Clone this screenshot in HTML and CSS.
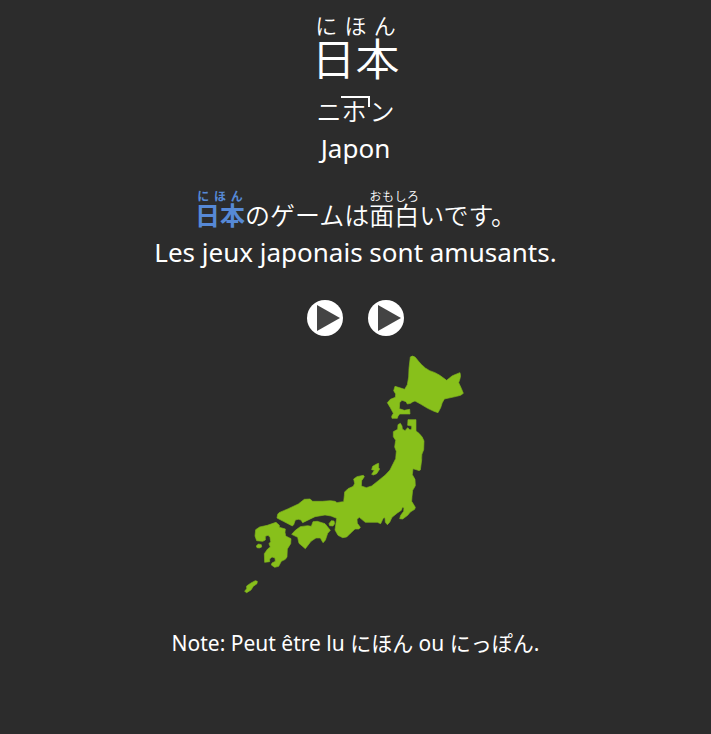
FILE: index.html
```html
<!DOCTYPE html>
<html lang="fr">
<head>
<meta charset="utf-8">
<meta name="viewport" content="width=device-width, initial-scale=1">
<title>日本 – Japon</title>
<link rel="stylesheet" href="styles.css">
</head>
<body>
<main class="card">
  <h1 class="word" lang="ja"><ruby>日本<rt>にほん</rt></ruby></h1>
  <p class="line reading" lang="ja">ニ<span class="accent">ホ</span>ン</p>
  <p class="line">Japon</p>
  <p class="line sentence" lang="ja"><ruby class="target">日本<rt>にほん</rt></ruby>のゲームは<ruby>面白<rt>おもしろ</rt></ruby>いです。</p>
  <p class="line">Les jeux japonais sont amusants.</p>
  <div class="players">
    <button class="play" type="button" aria-label="Écouter le mot">
      <svg viewBox="0 0 36 36" aria-hidden="true"><circle cx="18" cy="18" r="18"/><path d="M10 5V31L33 18Z"/></svg>
    </button>
    <button class="play" type="button" aria-label="Écouter la phrase">
      <svg viewBox="0 0 36 36" aria-hidden="true"><circle cx="18" cy="18" r="18"/><path d="M10 5V31L33 18Z"/></svg>
    </button>
  </div>
  <svg class="map" viewBox="236 350 240 250" role="img" aria-label="Carte du Japon">
    <g transform="translate(375 345) scale(.33333)">
      <path d="M106 36Q112 30 121 37Q130 49 140 59Q150 70 164 77Q181 82 193 90L215 106L231 93Q248 85 255 83Q258 91 255 101L251 113Q260 131 265 145Q259 152 245 154L208 162Q201 172 197 188L189 203L177 199L158 190L138 178L120 168Q112 170 107 175L97 177L93 170L81 166L74 173L73 191L88 196L104 193L105 207L74 207L69 214L67 220H51L50 214L55 205L46 188L37 173L46 163L61 157L62 147L56 137L60 124L70 127L89 133L97 119L101 96L102 70Z"/>
    </g>
    <g transform="translate(335 415) scale(.33333)">
      <path d="M219 14H243V48L252 55Q263 65 267 78L266 104Q258 118 260 135L256 165Q251 168 247 165L234 161L232 179L240 193L241 212L233 226L231 244L230 259L241 277L239 283L226 291L218 301L203 312L194 311L197 301L206 289L207 278L202 277L199 286L187 294L171 307L164 322L157 329L151 322L150 308L145 309L137 326L127 322L91 322L73 307L66 313L67 325L76 337L72 342L60 342L45 356L35 366L23 368L9 361L0 345L5 310L-12 303L-30 300L-60 305L-97 323L-102 315L-110 313L-119 315L-124 329L-128 333L-155 319L-174 309L-172 298L-168 293L-140 281L-110 267L-92 253L-75 252L-67 259L-38 259L-14 257L0 259L6 263L17 261L26 260L28 242L29 231L39 221L55 214L59 205L56 192L66 185L85 181L88 185L80 197L79 213L94 218L110 213L130 197L151 180L165 165L175 145L182 131L184 109L179 96L182 76L175 65L175 50L188 43L189 29L196 25L201 33L202 42L210 47L218 38L225 45L230 42L230 33L218 31Z"/>
      <path d="M125 147L131 145L131 158L134 162L125 176L115 180L110 178L118 166L110 164L113 154Z"/>
    </g>
    <g transform="translate(235 480) scale(.33333)">
      <path d="M62 149L74 141L97 136L123 127L133 136L133 142L151 147L150 157L152 168L168 176L167 191L157 207L156 231L151 238L139 244L131 259L119 262L109 255L111 249L121 244L120 234L111 231L104 237L104 245L89 247L88 221L98 207L106 201L102 191L107 185L105 172L99 166L91 169L91 180L83 184L65 182L60 168Z"/>
      <path d="M170 163L181 151L196 140L218 137L229 139L234 125L247 124L270 131L286 151L278 160L271 181L264 188L256 174L243 174L228 184L211 206L192 190L188 172Z"/>
      <path d="M282 131L289 122L297 123L299 131L294 138L284 137Z"/>
      <path d="M64 198L70 192L79 194L80 201L73 204L66 203Z"/>
      <path d="M29 334L35 326V318L48 309L61 302L67 304L66 311L55 319L48 330L35 338Z"/>
    </g>
  </svg>
  <p class="note">Note: Peut être lu にほん ou にっぽん.</p>
</main>
</body>
</html>
```
FILE: styles.css
```css
body {
  margin: 0;
  background: #2c2c2c;
  color: #fff;
  font-family: "Noto Sans", "Noto Sans CJK JP", sans-serif;
  text-align: center;
}

.card {
  display: flex;
  flex-direction: column;
  align-items: center;
  padding: 14px 16px;
}

.word,
.line,
.note {
  margin: 0;
  font-weight: 400;
}

.word {
  margin-bottom: 8px;
  font-family: "Noto Sans CJK JP", sans-serif;
  font-size: 44px;
  font-weight: 350;
  line-height: 52px;
}

.word rt {
  font-size: 22px;
  line-height: 24px;
}

.line {
  font-size: 26px;
  line-height: 38px;
}

.reading,
.sentence {
  font-family: "Noto Sans CJK JP", sans-serif;
  font-size: 25px;
  font-weight: 350;
}

.accent {
  display: inline-block;
  padding-right: 3px;
  background:
    linear-gradient(#fff, #fff) top / 100% 2px no-repeat,
    linear-gradient(#fff, #fff) top right / 2px 11px no-repeat;
  line-height: 28px;
}

.sentence {
  margin-top: 23px;
}

.sentence rt {
  font-size: 12px;
  line-height: 14px;
}

.target {
  color: #5689d6;
  font-weight: 700;
}

.players {
  display: flex;
  gap: 25px;
  margin-top: 29px;
}

.play {
  width: 36px;
  height: 36px;
  padding: 0;
  border: 0;
  border-radius: 50%;
  background: none;
}

.play svg {
  display: block;
  fill: #fff;
}

.play path {
  fill: #444;
}

.map {
  width: 240px;
  margin-top: 14px;
  fill: #88c01b;
  stroke: #80b51c;
  stroke-width: 2;
  stroke-linejoin: round;
}

.note {
  margin-top: 28px;
  font-size: 21px;
  line-height: 30px;
}
```
